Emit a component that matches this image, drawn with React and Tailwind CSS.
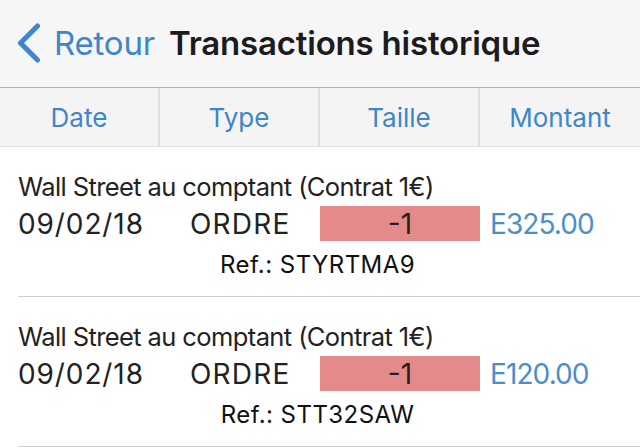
import React from "react";

const rows = [
  { title: "Wall Street au comptant (Contrat 1€)", date: "09/02/18", type: "ORDRE", size: "-1", amount: "E325.00", ref: "STYRTMA9" },
  { title: "Wall Street au comptant (Contrat 1€)", date: "09/02/18", type: "ORDRE", size: "-1", amount: "E120.00", ref: "STT32SAW" },
];

const tabs = ["Date", "Type", "Taille", "Montant"];

export default function App() {
  return (
    <div className="w-[640px] h-[448px] overflow-hidden bg-white" style={{ fontFamily: "Inter, 'Noto Sans', sans-serif" }}>
      {/* nav bar */}
      <div className="h-[88px] bg-[#f6f6f6] border-b border-[#b4b4b4] flex items-center pl-[16px]">
        <svg width="26" height="40" viewBox="0 0 26 40" className="mt-[-2px]">
          <path d="M21.5 3 L4.5 20 L21.5 37" fill="none" stroke="#3d86cb" strokeWidth="5" strokeLinecap="round" strokeLinejoin="round" />
        </svg>
        <span className="ml-[12px] text-[33px] text-[#3d86cb] tracking-[-0.2px]">Retour</span>
        <span className="ml-[14px] text-[33px] font-semibold text-[#1c1c1e] tracking-[-0.2px]">Transactions historique</span>
      </div>

      {/* column tabs */}
      <div className="h-[59px] bg-[#f4f4f4] border-b border-[#e2e2e2] grid grid-cols-4">
        {tabs.map((t, i) => (
          <div
            key={t}
            className={"flex items-center justify-center text-[26px] text-[#3d86cb] " + (i < 3 ? "border-r-2 border-[#dedede]" : "")}
          >
            {t}
          </div>
        ))}
      </div>

      {rows.map((r, i) => (
        <div key={i} className="pl-[30px]">
          <div className="pt-[25px] pb-[18px] border-b border-[#cfcfcf] ml-[-12px]">
            <div className="h-[30px] leading-[30px] text-[25.5px] text-[#222] tracking-[-0.6px] whitespace-nowrap">{r.title}</div>
            <div className="mt-[4px] flex items-center h-[35px] text-[28px] text-[#222]">
              <div className="w-[172px] tracking-[0.9px]">{r.date}</div>
              <div className="w-[130px] tracking-[1.2px]">{r.type}</div>
              <div className="w-[160px] h-[35px] bg-[#e48a8b] flex items-center justify-center">{r.size}</div>
              <div className="ml-[10px] text-[#4b8fca] tracking-[-0.9px]">{r.amount}</div>
            </div>
            <div className="mt-[11px] h-[26px] leading-[26px] text-[24px] text-[#111] text-center pr-[23px] tracking-[0.45px]">Ref.: {r.ref}</div>
          </div>
        </div>
      ))}
    </div>
  );
}
